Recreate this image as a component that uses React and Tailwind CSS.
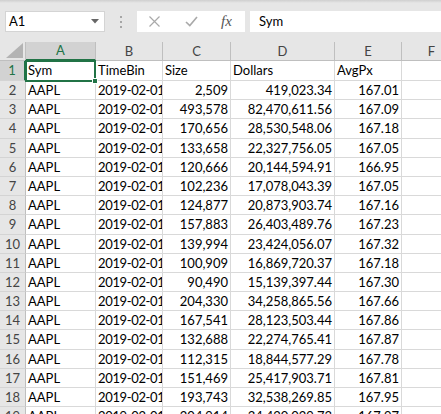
import React from 'react';

const ROWS = [
  ['2,509', '419,023.34', '167.01'],
  ['493,578', '82,470,611.56', '167.09'],
  ['170,656', '28,530,548.06', '167.18'],
  ['133,658', '22,327,756.05', '167.05'],
  ['120,666', '20,144,594.91', '166.95'],
  ['102,236', '17,078,043.39', '167.05'],
  ['124,877', '20,873,903.74', '167.16'],
  ['157,883', '26,403,489.76', '167.23'],
  ['139,994', '23,424,056.07', '167.32'],
  ['100,909', '16,869,720.37', '167.18'],
  ['90,490', '15,139,397.44', '167.30'],
  ['204,330', '34,258,865.56', '167.66'],
  ['167,541', '28,123,503.44', '167.86'],
  ['132,688', '22,274,765.41', '167.87'],
  ['112,315', '18,844,577.29', '167.78'],
  ['151,469', '25,417,903.71', '167.81'],
  ['193,743', '32,538,269.85', '167.95'],
  ['204,914', '34,420,029.73', '167.97'],
];

const COLS = [
  { key: 'A', w: 'w-[70px]' },
  { key: 'B', w: 'w-[67px]' },
  { key: 'C', w: 'w-[68px]' },
  { key: 'D', w: 'w-[104px]' },
  { key: 'E', w: 'w-[67px]' },
  { key: 'F', w: 'w-[60px]' },
];

function Cell({ w, right, tight, children }) {
  return (
    <div
      className={`${w} shrink-0 border-r border-b border-[#d9d9d9] overflow-hidden whitespace-nowrap pl-[2px] ${right ? 'text-right pr-[2px]' : 'pr-0'} ${tight ? 'tracking-[-0.35px]' : ''}`}
    >
      {children}
    </div>
  );
}

function RowHead({ n, active }) {
  return (
    <div
      className={`w-[26px] shrink-0 border-b border-[#d4d4d4] text-center ${
        active
          ? 'bg-[#d2d2d2] text-[#217346] border-r-2 border-r-[#217346]'
          : 'bg-[#e6e6e6] text-[#444] border-r border-r-[#bfbfbf]'
      }`}
    >
      {n}
    </div>
  );
}

export default function App() {
  return (
    <div
      className="w-[441px] h-[414px] overflow-hidden bg-white text-[13px] text-black"
      style={{ fontFamily: 'Lato, "Open Sans", sans-serif' }}
    >
      {/* ── Formula bar ── */}
      <div className="h-[42px] bg-[#e6e6e6]">
        <div className="h-[3px] bg-gradient-to-b from-[#cfcfcf] to-[#e6e6e6]" />
        <div className="flex pt-[8px] h-[29px]">
          {/* name box */}
          <div className="ml-[5px] w-[100px] h-[21px] bg-white border border-[#d4d4d4] flex items-center justify-between pl-[3px] pr-[5px]">
            <span className="leading-none">A1</span>
            <svg width="8" height="5" viewBox="0 0 8 5">
              <path d="M0 0 L8 0 L4 4.5 Z" fill="#666" />
            </svg>
          </div>
          {/* grip dots */}
          <div className="w-[32px] flex flex-col items-center justify-center gap-[3px]">
            <span className="w-[2px] h-[2px] bg-[#a6a6a6]" />
            <span className="w-[2px] h-[2px] bg-[#a6a6a6]" />
            <span className="w-[2px] h-[2px] bg-[#a6a6a6]" />
          </div>
          {/* cancel / enter / fx */}
          <div className="w-[108px] h-[21px] bg-white flex items-center">
            <svg width="11" height="11" viewBox="0 0 11 11" className="ml-[12px]">
              <path d="M0.5 0.5 L10.5 10.5 M10.5 0.5 L0.5 10.5" stroke="#a9a9a9" strokeWidth="1.2" />
            </svg>
            <svg width="13" height="11" viewBox="0 0 13 11" className="ml-[25px]">
              <path d="M1 6 L4.8 9.6 L12 1" stroke="#a9a9a9" strokeWidth="1.6" fill="none" />
            </svg>
            <span
              className="ml-[23px] italic text-[15px] text-[#555] leading-none"
              style={{ fontFamily: '"Liberation Serif", serif' }}
            >
              fx
            </span>
          </div>
          {/* formula content */}
          <div className="ml-[5px] flex-1 h-[21px] bg-white flex items-center pl-[9px]">
            <span className="leading-none">Sym</span>
          </div>
        </div>
      </div>

      {/* ── Column headers ── */}
      <div className="flex h-[19px]">
        <div className="w-[26px] shrink-0 bg-[#e6e6e6] border-r border-b border-[#bfbfbf] relative">
          <svg width="17" height="15" viewBox="0 0 17 15" className="absolute right-[2px] bottom-[2px]">
            <path d="M17 0 L17 15 L0 15 Z" fill="#b3b3b3" />
          </svg>
        </div>
        {COLS.map((c, i) => (
          <div
            key={c.key}
            className={`${c.w} shrink-0 text-center border-r border-[#bfbfbf] ${
              i === 0
                ? 'bg-[#d2d2d2] text-[#217346] border-b-2 border-b-[#217346] leading-[17px]'
                : 'bg-[#e6e6e6] text-[#444] border-b border-b-[#bfbfbf] leading-[18px]'
            }`}
          >
            {c.key}
          </div>
        ))}
      </div>

      {/* ── Row 1: headers ── */}
      <div className="flex h-[20px] leading-[19px] relative">
        <RowHead n={1} active />
        <Cell w={COLS[0].w}>Sym</Cell>
        <Cell w={COLS[1].w}>TimeBin</Cell>
        <Cell w={COLS[2].w}>Size</Cell>
        <Cell w={COLS[3].w}>Dollars</Cell>
        <Cell w={COLS[4].w}>AvgPx</Cell>
        <Cell w={COLS[5].w} />
        {/* active cell outline */}
        <div className="absolute left-[25px] top-[-1px] w-[71px] h-[22px] border-2 border-[#217346] pointer-events-none" />
        <div className="absolute left-[92px] top-[17px] w-[6px] h-[6px] bg-[#217346] border border-white z-10" />
      </div>

      {/* ── Data rows ── */}
      {ROWS.map((r, i) => (
        <div key={i} className="flex h-[19.2px] leading-[18.2px]">
          <RowHead n={i + 2} />
          <Cell w={COLS[0].w}>AAPL</Cell>
          <Cell w={COLS[1].w} tight>2019-02-01</Cell>
          <Cell w={COLS[2].w} right>{r[0]}</Cell>
          <Cell w={COLS[3].w} right>{r[1]}</Cell>
          <Cell w={COLS[4].w} right>{r[2]}</Cell>
          <Cell w={COLS[5].w} />
        </div>
      ))}
    </div>
  );
}
